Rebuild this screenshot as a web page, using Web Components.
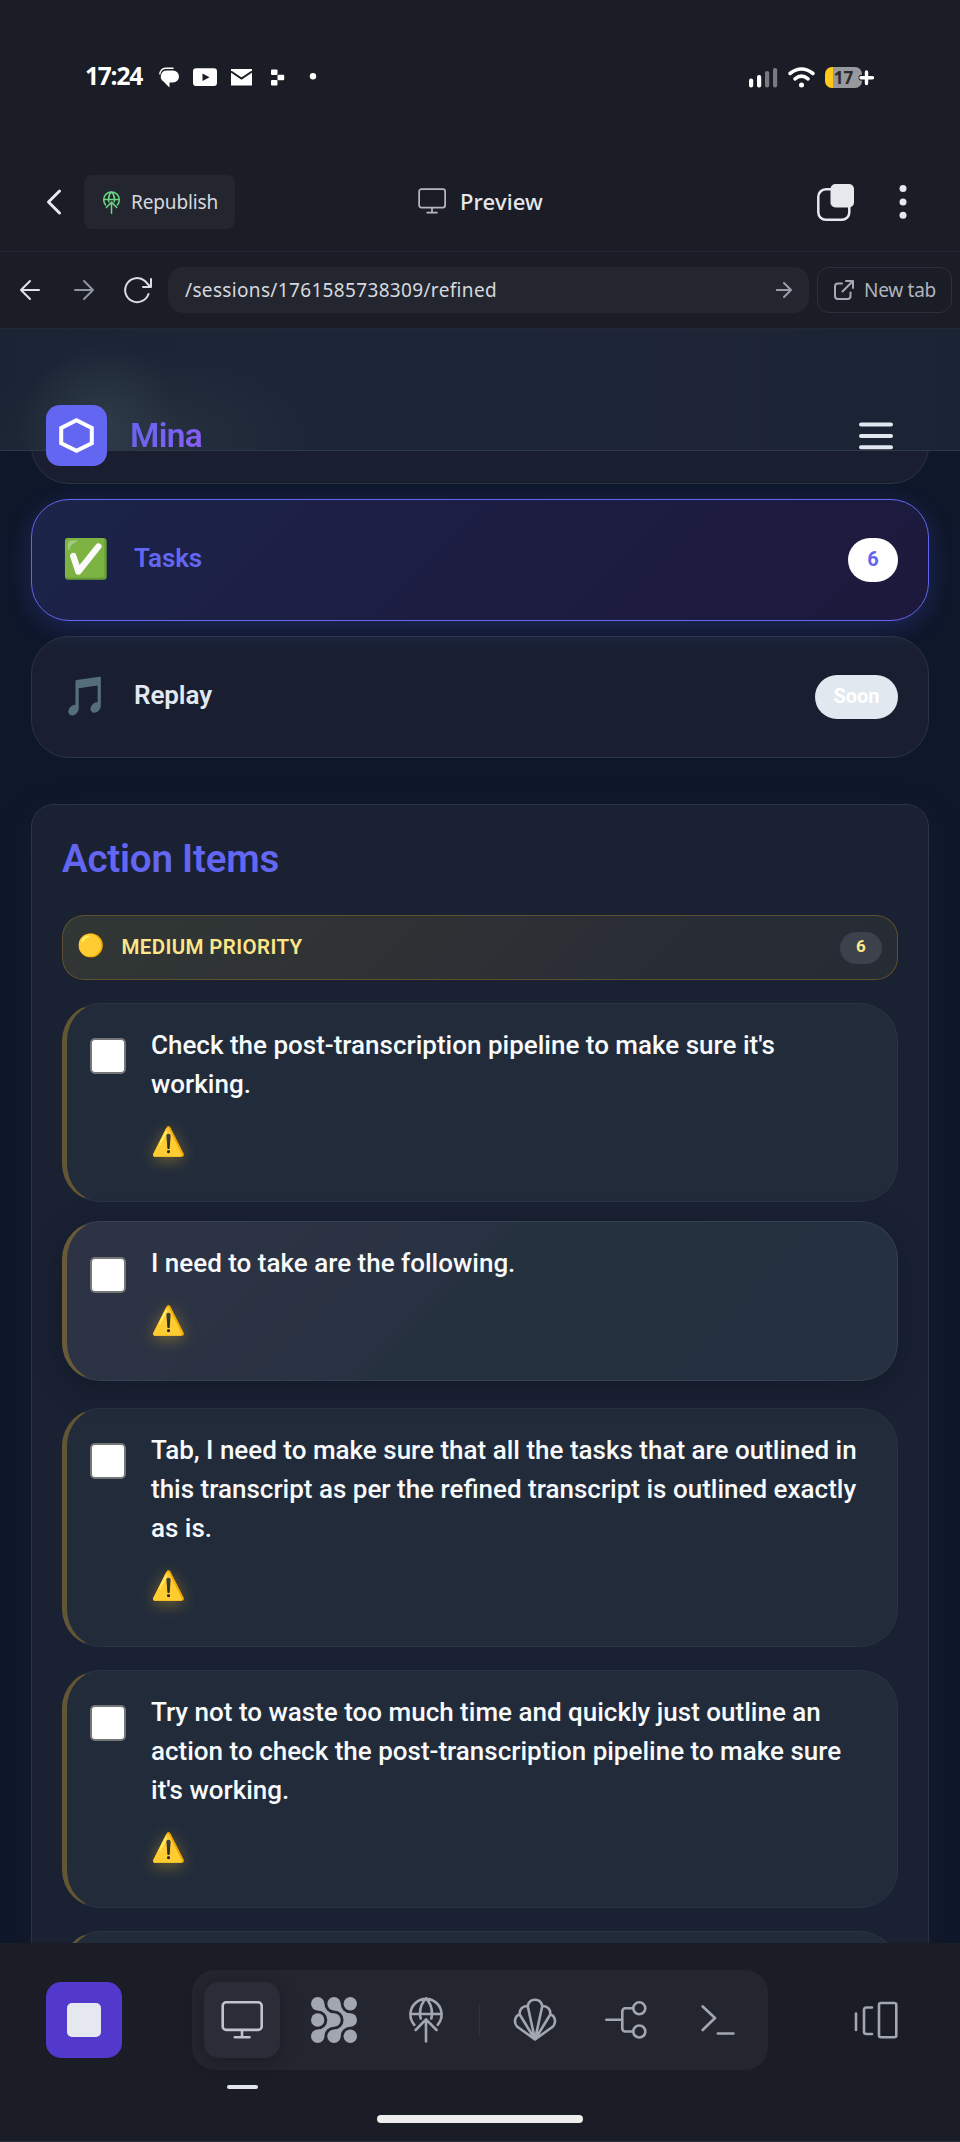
<!DOCTYPE html>
<html lang="en">
<head>
<meta charset="utf-8">
<title>Mina – Preview</title>
<style>
html,body{margin:0;padding:0}
body{width:960px;height:2142px;overflow:hidden;background:#1a1d25;font-family:Roboto,"Liberation Sans",sans-serif;color:#e2e8f0}
</style>
</head>
<body>
<workspace-app></workspace-app>
<script>
function define(name, css, html, setup){
  customElements.define(name, class extends HTMLElement{
    constructor(){
      super();
      const t=document.createElement('template');
      t.innerHTML='<style>*{box-sizing:border-box}svg{display:block;flex:none;overflow:visible}'+css+'</style>'+html;
      this.attachShadow({mode:'open'}).appendChild(t.content.cloneNode(true));
    }
    connectedCallback(){ if(setup) setup(this); }
  });
}

/* Text that spreads its letters to fill a given width. */
define('fit-text',
  ':host{display:inline-block;white-space:nowrap}span{display:inline-block}',
  '<span><slot></slot></span>',
  el=>{
    const s=el.shadowRoot.querySelector('span'), w=+el.getAttribute('w');
    s.style.letterSpacing='0px';
    const n=el.textContent.length, d=(w-s.getBoundingClientRect().width)/n;
    s.style.letterSpacing=d.toFixed(3)+'px';
  });

const globe='<path d="M5.3 27.8A15.6 15.6 0 1 1 28.7 27.8M1.4 17H32.6M17 1.4C13.5 5 11 10 11 16.500 11 18.500 11.200 20 11.700 21.500M17 1.400C20.500 5 23 10 23 16.500 23 18.500 22.800 20 22.300 21.500M17 22.500V44.500M6.700 33 17 22.300 27.500 33"/>';
const monitor='<rect x="1.700" y="1.300" width="39" height="27.600" rx="3.500"/><path d="M21 29V36M13.800 36.300H28.500"/>';

define('status-bar',
`:host{display:flex;align-items:center;height:154px;padding:0 85px 0 85px;justify-content:space-between;color:#fff}
.l,.r{display:flex;align-items:center}
.time{font:700 24.500px/30px "Open Sans","Noto Sans",sans-serif;margin-top:-3px}
.r{gap:10px}
.bat{display:flex;align-items:center;width:50px;height:21px}
.cell{width:39px;height:21px;border-radius:7px;background:linear-gradient(90deg,#ffc91a 8px,#98999d 8px);color:#2a2a2a;font:700 17px/21px "Open Sans",sans-serif;text-align:center}
.bat svg{margin-left:-4px}`,
`<div class="l"><fit-text class="time" w="57">17:24</fit-text>
<svg width="165" height="22" viewBox="0 0 165 22" style="margin-left:16px" fill="#fff">
<path d="M9 4.500H15A6 6 0 0 1 15 16.500L11.500 16.500V21.500L5.500 15.500A6 6 0 0 1 9 4.500Z"/><path d="M1.800 8.500A6 6 0 0 1 7.500 2.300H15.500" fill="none" stroke="#fff" stroke-width="1.400"/>
<path d="M38 2.300H56Q59 2.300 59 5.500V16.500Q59 20 56 20H38Q35 20 35 16.500V5.500Q35 2.300 38 2.300ZM44.500 7.500V15L51.500 11.200Z" fill-rule="evenodd"/>
<path d="M73 3H94V19.500H73Z"/><path d="M73 5.500 83.500 12.500 94 5.500" fill="none" stroke="#1a1d25" stroke-width="2"/>
<rect x="113" y="3.500" width="6.500" height="5.500" rx="1"/><rect x="119.500" y="8.800" width="6.700" height="5.500" rx="1"/><rect x="113" y="14" width="6.500" height="5.500" rx="1"/>
<circle cx="155" cy="10.300" r="3.200"/></svg></div>
<div class="r"><svg width="29" height="21" viewBox="0 0 29 21"><g fill="#fff"><rect x="0" y="11.500" width="4.200" height="9" rx="2"/><rect x="8" y="8" width="4.200" height="12.500" rx="2"/></g><g fill="#787a80"><rect x="16" y="4" width="4.200" height="16.500" rx="2"/><rect x="24" y="1" width="4.200" height="19.500" rx="2"/></g></svg>
<svg width="27" height="21" viewBox="0 0 27 21" fill="none" stroke="#fff" stroke-width="3.600" stroke-linecap="round"><path d="M2 6.500Q13.500-2.500 25 6.500M7 11.800Q13.500 6.500 20 11.800"/><circle cx="13.500" cy="18" r="2.500" fill="#fff" stroke="none"/></svg>
<div class="bat"><div class="cell">17</div><svg width="17" height="17" viewBox="0 0 17 17"><path d="M8.500 3.500V14M3.500 8.700H14" stroke="#1a1d25" stroke-width="6" stroke-linecap="round"/><path d="M8.500 3V14.500M3 8.700H14.500" stroke="#fff" stroke-width="3.400" stroke-linecap="round"/></svg></div></div>`);

define('app-header',
`:host{display:grid;grid-template-columns:1fr auto 1fr;align-items:center;height:98px;padding:0 53px 1px 46px;border-bottom:1px solid #252834;font-family:"Noto Sans","Open Sans",sans-serif;color:#e6e8ee}
.l,.c,.r{display:flex;align-items:center}
.btn{display:flex;align-items:center;gap:11px;margin-left:22px;width:151px;height:54px;border-radius:8px;background:#24262f;padding-left:19px;font-size:19px;line-height:26px;color:#d6d8df}
.c{gap:14px;font-weight:500;font-size:22px;line-height:30px;margin:-2px -4px 0 4px}
.r{justify-content:flex-end;gap:45px}`,
`<div class="l"><svg width="16" height="26" viewBox="0 0 16 26" fill="none" stroke="#e6e8ee" stroke-width="3" stroke-linecap="round" stroke-linejoin="round"><path d="M13.500 2 2.500 13 13.500 24"/></svg>
<div class="btn"><svg width="17" height="23" viewBox="0 0 34 46" fill="none" stroke="#6bd883" stroke-width="3" stroke-linecap="round" stroke-linejoin="round">${globe}</svg><fit-text w="87">Republish</fit-text></div></div>
<div class="c"><svg width="28" height="26" viewBox="0 0 42 38" fill="none" stroke="#b4b8c2" stroke-width="2.600" stroke-linecap="round">${monitor}</svg><fit-text w="83">Preview</fit-text></div>
<div class="r"><svg width="37" height="37" viewBox="0 0 37 37"><rect x="1.300" y="5.300" width="31" height="30.500" rx="7.500" fill="none" stroke="#e6e8ee" stroke-width="2.500"/><rect x="13.500" y="0" width="23.500" height="23.500" rx="5" fill="#e6e8ee"/></svg>
<svg width="8" height="34" viewBox="0 0 8 34" fill="#e6e8ee"><circle cx="4" cy="3.600" r="3.500"/><circle cx="4" cy="17" r="3.500"/><circle cx="4" cy="30.200" r="3.500"/></svg></div>`);

define('address-bar',
`:host{display:flex;align-items:center;height:77px;border-bottom:1px solid #252834;padding:0 8px 0 19px;font-family:"Noto Sans","Open Sans",sans-serif}
.url{display:flex;align-items:center;justify-content:space-between;width:641px;height:46px;border-radius:15px;background:#24262f;margin-left:14px;padding:0 17px;font-size:19px;line-height:26px;color:#d6d8df}
.new{display:flex;align-items:center;gap:10px;width:135px;height:46px;border:1px solid #2d303c;border-radius:12px;margin-left:8px;padding-left:16px;font-size:19px;color:#b1b4be}
svg{fill:none;stroke-linecap:round;stroke-linejoin:round;stroke-width:2}`,
`<svg width="22" height="22" viewBox="0 0 22 22" stroke="#e0e2e9"><path d="M20 11H2M11 2 2 11 11 20"/></svg>
<svg width="22" height="22" viewBox="0 0 22 22" stroke="#9094a1" style="margin-left:32px"><path d="M2 11H20M11 2 20 11 11 20"/></svg>
<svg width="30" height="26" viewBox="0 0 30 26" stroke="#dadde4" style="margin-left:29px"><path d="M24.500 17A12 12 0 1 1 21 4L26 9.500M27 2V10H19"/></svg>
<div class="url"><fit-text w="312">/sessions/1761585738309/refined</fit-text><svg width="16" height="16" viewBox="0 0 16 16" stroke="#9a9da8" stroke-width="1.700"><path d="M.800 8H15M8 1 15 8 8 15"/></svg></div>
<div class="new"><svg width="20" height="20" viewBox="0 0 20 20" stroke="#a6a9b4"><path d="M8 3.500H4A3 3 0 0 0 1 6.500V16A3 3 0 0 0 4 19H13.500A3 3 0 0 0 16.500 16V12.500M12 1H19V8M19 1 8.500 11.500"/></svg><fit-text w="72">New tab</fit-text></div>`);

define('mina-header',
`:host{display:flex;align-items:flex-start;justify-content:space-between;height:122px;padding:76px 67px 0 46px;border-bottom:1px solid #2e3848;z-index:2;
background:radial-gradient(ellipse 80px 85px at 100px 98px,rgba(62,76,90,.48),rgba(62,76,90,0) 100%),radial-gradient(ellipse 170px 90px at 150px 112px,rgba(56,66,74,.36),rgba(56,66,74,0) 100%),linear-gradient(90deg,#1a2434,#1c2637 25%,#1d2537 75%,#1a2434)}
.brand{display:flex;gap:23px}
.logo{display:grid;place-items:center;width:61px;height:61px;border-radius:14px;background:#6366f1}
.name{font-weight:600;font-size:33.500px;line-height:62px;background:linear-gradient(135deg,#6366f1 10%,#8b5cf6 90%);-webkit-background-clip:text;background-clip:text;color:transparent}
.menu{margin-top:17px}`,
`<div class="brand"><div class="logo"><svg width="35" height="35" viewBox="0 0 35 35" fill="none" stroke="#fff" stroke-width="4"><path d="M17.500 2.300 32.800 10V25.200L17.500 32.800 2.200 25.200V10Z"/></svg></div><fit-text class="name" w="72">Mina</fit-text></div>
<svg class="menu" width="34" height="26" viewBox="0 0 34 26" stroke="#e2e8f0" stroke-width="4" stroke-linecap="round"><path d="M2 2.500H32M2 14H32M2 25.300H32"/></svg>`);

define('nav-card',
`:host{display:flex;align-items:center;height:122px;border:1px solid #2a3444;border-radius:38px;background:#191e30;padding:0 30px;color:#e2e8f0}
:host([active]){border-color:#6366f1;background:linear-gradient(135deg,#1b2449,#1d1d42 50%,#1c193c);color:#6366f1;box-shadow:0 6px 24px rgba(80,90,241,.24);position:relative}
:host([soon]){background:linear-gradient(180deg,#1a2234,#191e30 18%,#191e30)}
.i{display:block;width:72px}
.t{flex:1;font-size:26px;font-weight:600;line-height:34px;margin-top:-5px}
.b{font-size:20px;font-weight:700;line-height:42px;height:44px;border-radius:22px;padding:0 18.500px;background:#fff;color:#6366f1;min-width:50px;text-align:center}
:host([soon]) .b{background:#e2e8f0;color:#fff}
:host([blank]) *{visibility:hidden}`,
`<slot name="icon" class="i"></slot><div class="t"><slot></slot></div><div class="b"><slot name="badge"></slot></div>`);

define('emoji-icon',
`:host{display:block}span{display:block;font:var(--size,36px)/1.2 "Noto Color Emoji",sans-serif;white-space:nowrap}`,
`<span><slot></slot></span>`);

define('priority-header',
`:host{display:flex;align-items:center;height:65px;border:1px solid rgba(120,98,40,.65);border-radius:22px;background:linear-gradient(135deg,#313735,#2f3234 40%,#282c35 75%,#262c34);padding:0 15px 0 14.500px;color:#fde68a;margin-top:24px}
emoji-icon{--size:22px;width:44px;margin-top:-3px}
.t{flex:1;font-size:20.500px;font-weight:600;line-height:28px;margin-top:-1px}
.b{width:42px;height:32px;border-radius:16px;background:#3c414b;text-align:center;font-size:17px;font-weight:700;line-height:28px}`,
`<emoji-icon>🟡</emoji-icon><div class="t"><fit-text w="181">MEDIUM PRIORITY</fit-text></div><div class="b">6</div>`);

define('task-item',
`:host{display:flex;align-items:flex-start;height:var(--h);margin-top:23px;border:1px solid #2a3543;border-left:5px solid #625635;border-radius:38px;background:#212b3a;padding:22px 20px 0 23px}
:host([raised]){border-color:#36414f;border-left-color:#695a38;background:linear-gradient(135deg,#2d3345,#293242 44%,#26313f 46%,#243040);box-shadow:0 8px 30px rgba(8,18,28,.4);margin-top:19px;margin-bottom:27px;position:relative}
.box{flex:none;width:36px;height:36px;border:2px solid #767676;border-radius:5px;background:#fff;margin-top:12px}
:host([raised]) .box{margin-top:13px}
.body{margin-left:25px;width:712px;font-size:26px;font-weight:500;line-height:39px;color:#f8fafc}
emoji-icon{--size:28px;margin:20.500px 0 0 0;filter:drop-shadow(0 3px 8px rgba(251,191,36,.4))}
:host([empty]) .body{display:none}`,
`<div class="box"></div><div class="body"><slot></slot><emoji-icon>⚠️</emoji-icon></div>`);

define('action-panel',
`:host{display:block;height:1200px;margin-top:46px;border:1px solid #2a3445;border-radius:23px;background:#1a2133;padding:29px 30px 0;box-shadow:0 8px 26px rgba(26,35,50,.6)}
h2{margin:0;font-size:38.500px;font-weight:600;line-height:50px;color:#6366f1;padding-bottom:7px}`,
`<h2><fit-text w="217">Action Items</fit-text></h2><priority-header></priority-header>
<task-item style="--h:199px">Check the post-transcription pipeline to make sure it's working.</task-item>
<task-item raised style="--h:160px">I need to take are the following.</task-item>
<task-item style="--h:239px">Tab, I need to make sure that all the tasks that are outlined in this transcript as per the refined transcript is outlined exactly as is.</task-item>
<task-item style="--h:238px">Try not to waste too much time and quickly just outline an action to check the post-transcription pipeline to make sure it's working.</task-item>
<task-item empty style="--h:239px"></task-item>`);

define('page-view',
`:host{display:grid;height:1614px;overflow:hidden;background:#0f172a;grid-template:minmax(0,1fr)/1fr}
mina-header,.scroll{grid-area:1/1}mina-header{align-self:start}
.scroll{padding:33px 31px 0}
.nav{display:grid;gap:15px}
emoji-icon{--size:38px}`,
`<mina-header></mina-header><div class="scroll"><div class="nav"><nav-card blank></nav-card>
<nav-card active><emoji-icon slot="icon">✅</emoji-icon><fit-text w="68">Tasks</fit-text><span slot="badge">6</span></nav-card>
<nav-card soon><emoji-icon slot="icon">🎵</emoji-icon><fit-text w="78">Replay</fit-text><span slot="badge">Soon</span></nav-card></div>
<action-panel></action-panel></div>`);

define('bottom-dock',
`:host{display:flex;flex-direction:column;height:199px;background:#1a1d25;border-bottom:1px solid #2a2f3a;align-items:center}
.row{display:flex;align-items:center;justify-content:space-between;align-self:stretch;height:100px;margin-top:27px;padding:0 62px 0 46px}
.stop{display:grid;place-items:center;width:76px;height:76px;border-radius:15px;background:#5239cc}
.stop i{width:34px;height:34px;border-radius:5px;background:#e6e8ef}
.dock{display:flex;align-items:center;justify-content:space-between;width:576px;height:100px;border-radius:23px;background:#24262f;padding:0 12px;margin-left:-16px}
.tab{position:relative;display:grid;place-items:center;width:76px;height:76px;border-radius:15px}
.tab.on{background:#2b2c38;box-shadow:0 3px 16px rgba(20,20,28,.55)}
.tab.on:after{content:"";position:absolute;left:22.500px;top:103px;width:31px;height:4px;border-radius:2px;background:#e2e6ee}
.sep{width:1px;height:30px;background:#30333e}
.home{width:206px;height:8px;border-radius:4px;background:#eee;margin-top:45px}
.s{fill:none;stroke:#a1a6b1;stroke-width:2.600;stroke-linecap:round;stroke-linejoin:round}`,
`<div class="row"><div class="stop"><i></i></div>
<div class="dock"><div class="tab on"><svg class="s" style="stroke:#c1c4cb" width="42" height="38" viewBox="0 0 42 38">${monitor}</svg></div>
<div class="tab"><svg width="46" height="46" viewBox="0 0 46 46" fill="#a1a6b1"><circle cx="6.700" cy="6.700" r="6.700"/><circle cx="23" cy="6.700" r="6.700"/><circle cx="39.300" cy="6.700" r="6.700"/><circle cx="6.700" cy="23" r="6.700"/><circle cx="23" cy="23" r="6.700"/><circle cx="39.300" cy="23" r="6.700"/><circle cx="6.700" cy="39.300" r="6.700"/><circle cx="23" cy="39.300" r="6.700"/><circle cx="39.300" cy="39.300" r="6.700"/><path d="M13.400 6.700A9.600 9.600 0 0 0 23 16.300L16.300 23A9.600 9.600 0 0 0 6.700 13.400ZM29.700 6.700A9.600 9.600 0 0 0 39.300 16.300L32.600 23A9.600 9.600 0 0 0 23 13.400ZM16.300 23A9.600 9.600 0 0 1 6.700 32.600L13.400 39.300A9.600 9.600 0 0 1 23 29.700ZM32.600 23A9.600 9.600 0 0 1 23 32.600L29.700 39.300A9.600 9.600 0 0 1 39.300 29.700Z"/></svg></div>
<div class="tab"><svg class="s" width="34" height="46" viewBox="0 0 34 46">${globe}</svg></div>
<div class="sep"></div>
<div class="tab"><svg class="s" style="margin-left:1px" width="42" height="42" viewBox="0 0 42 42"><path d="M21 40.500 3 27.500C-.500 23.500 .800 16.500 5.700 15.500 5 10.500 9 6.500 13.700 7 15.500-1.300 26.500-1.300 28.300 7 33 6.500 37 10.500 36.300 15.500 41.200 16.500 42.500 23.500 39 27.500ZM13.700 7 21 40.500 28.300 7M5.700 15.500 21 40.500 36.300 15.500"/></svg></div>
<div class="tab"><svg class="s" width="42" height="38" viewBox="0 0 42 38"><path d="M1.300 18.700H17.300M28 7.300H20.300A3 3 0 0 0 17.300 10.300V27.500A3 3 0 0 0 20.300 30.500H28"/><circle cx="34.300" cy="7.300" r="6"/><circle cx="34.300" cy="30.500" r="6"/></svg></div>
<div class="tab"><svg class="s" width="34" height="30" viewBox="0 0 34 30"><path d="M1.700 1.500 14 13 1.700 25M16.800 28.500H32.500"/></svg></div></div>
<svg class="s" width="44" height="38" viewBox="0 0 44 38"><path d="M2 12.500V29M18 6.500H12.500A2.500 2.500 0 0 0 10 9V30.500A2.500 2.500 0 0 0 12.500 33H18"/><rect x="25" y="2" width="17.300" height="34.300" rx="2"/></svg></div>
<div class="home"></div>`);

define('workspace-app',
':host{display:flex;flex-direction:column;width:960px;height:2142px;background:#1a1d25}',
'<status-bar></status-bar><app-header></app-header><address-bar></address-bar><page-view></page-view><bottom-dock></bottom-dock>');
</script>
</body>
</html>
